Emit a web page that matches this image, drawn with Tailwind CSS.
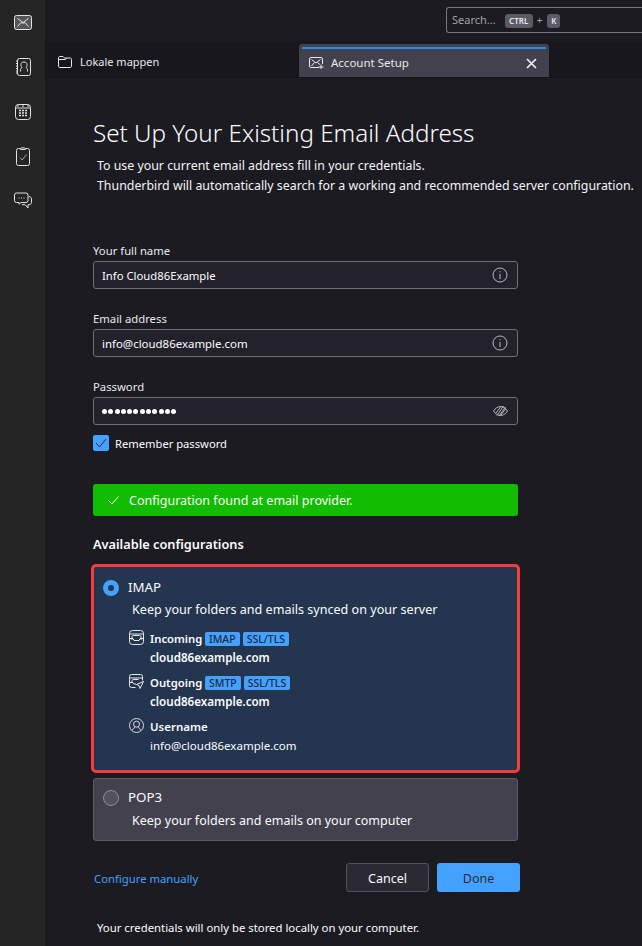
<!DOCTYPE html>
<html lang="en">

<head>
  <meta charset="UTF-8">
  <title>Account Setup</title>
  <script src="https://cdn.jsdelivr.net/npm/@tailwindcss/browser@4"></script>
</head>

<body class="bg-[#1c1b22] h-[946px] overflow-hidden font-['Noto_Sans',sans-serif] text-[#fbfbfe]">
  <div class="flex h-[946px]">
    <!-- spaces toolbar -->
    <nav class="w-[45px] shrink-0 bg-[#252525] flex flex-col items-center pt-[15px] text-[#e4e4e4]">
      <svg width="18" height="15" viewBox="0 0 18 15" fill="#55555a" stroke="currentColor" stroke-width="1"><rect x=".5" y=".5" width="17" height="14" rx="2" /><path d="M3.500 3.500 9 7.500l5.500-4M3.500 11.500 7 7.500M14.500 11.500 11 7.500M7 7.500c1.300.800 2.700.800 4 0" fill="none" /></svg>
      <svg class="mt-[28px]" width="16" height="18" viewBox="0 0 16 18" fill="none" stroke="currentColor" stroke-width="1"><rect x="2.500" y=".5" width="13" height="17" rx="2" /><path d="M1 3h2M1 5.500h2M1 8h2M1 10.500h2M1 13h2M1 15h2" /><path d="M5.500 13.500v-2c0-1 1-1.500 1.500-2-.7-.7-1-1.500-1-3 0-1.500 1-2.500 3-2.500s3 1 3 2.500c0 1.500-.3 2.300-1 3 .5.500 1.500 1 1.500 2v2" /></svg>
      <svg class="mt-[28px]" width="16" height="16" viewBox="0 0 16 16" fill="none" stroke="currentColor" stroke-width="1"><rect x=".5" y=".5" width="15" height="15" rx="3" /><path d="M.5 4h15M3 .5V3M8 .5V3M13 .5V3" /><path d="M4 6.500h2M7 6.500h2M10 6.500h2M4 9h2M7 9h2M10 9h2M4 11.500h2M7 11.500h2M10 11.500h2" stroke-width="1.300" /></svg>
      <svg class="mt-[27px]" width="14" height="19" viewBox="0 0 14 19" fill="none" stroke="currentColor" stroke-width="1"><rect x=".5" y="1.500" width="13" height="17" rx="2" /><path d="M4.500 1.500c0-1 5-1 5 0v1h-5z" fill="#252525" /><path d="M4 10.500 6.200 13 10.500 7.500" stroke="#a8a8a8" /></svg>
      <svg class="mt-[26px]" width="18" height="19" viewBox="0 0 18 18" fill="none" stroke="currentColor" stroke-width="1"><path d="M2.500.5h9.500a2 2 0 0 1 2 2v5.500a2 2 0 0 1-2 2H7l-2 1.800v-1.800H2.500a2 2 0 0 1-2-2V2.500a2 2 0 0 1 2-2z" /><path d="M15 4c1.500.300 2.500 1.200 2.500 2.500v3.500c0 1.200-.8 2-2 2.200h-1.500v3.300l-3-3.300H8" /><path d="M4.500 5.500h1M7 5.500h1M9.500 5.500h1" /></svg>
    </nav>

    <div class="flex-1 min-w-0 flex flex-col">
      <!-- title bar -->
      <header class="h-[41px] shrink-0 bg-[#1c1b22] pt-[7px] pl-[401px]">
        <div class="h-[26px] w-[220px] border border-[#77777f] rounded-l-[3px] border-r-0 flex items-center pl-[5px] pt-[1px] text-[11px] text-[#a2a2a8]">
          Search...
          <span class="ml-[9px] bg-[#5b5b66] text-[#e8e8ec] rounded-[3px] h-[14px] w-[28px] flex items-center justify-center text-[8px] font-semibold">CTRL</span>
          <span class="mx-[4px] text-[10px]">+</span>
          <span class="ml-[1px] bg-[#5b5b66] text-[#e8e8ec] rounded-[3px] h-[14px] w-[13px] flex items-center justify-center text-[8px] font-semibold">K</span>
        </div>
      </header>

      <!-- tabs -->
      <div class="h-[37px] shrink-0 bg-[#17171d] flex items-end border-b border-[#121217]">
        <div class="w-[254px] h-[37px] flex items-center pl-[13px] pt-[7px] gap-[8px] text-[11px] text-[#e8e8ec]">
          <svg width="14" height="12" viewBox="0 0 14 12" fill="none" stroke="currentColor" stroke-width="1"><path d="M.5 2c0-1 .5-1.500 1.500-1.500h3l1.500 1.500h5.500c1 0 1.500.5 1.500 1.500V10c0 1-.5 1.500-1.500 1.500H2c-1 0-1.500-.5-1.500-1.500zM.5 3.500h7l1-1.500" /></svg>
          Lokale mappen
        </div>
        <div class="w-[250px] h-[33px] bg-[#42414d] rounded-t-[3px] pt-[3px] px-[3px]">
          <div class="h-[2px] bg-[#2a8ae6]"></div>
          <div class="flex items-center h-[26px] pt-[2px] pl-[7px] pr-[9px] text-[11.500px] text-[#e8e8ec]">
            <svg width="15" height="12" viewBox="0 0 15 12" fill="none" stroke="currentColor" stroke-width="1"><path d="M10 10.500H2a1.500 1.500 0 0 1-1.500-1.500V2A1.500 1.500 0 0 1 2 .5h10A1.500 1.500 0 0 1 13.500 2v5" /><path d="M2.500 2.500 7 6l4.500-3.500M2.500 9 5.500 5.500M11 7.500 8.500 5.500M12 7.500v4.500M9.500 10h5" /></svg>
            <span class="ml-[7px] flex-1">Account Setup</span>
            <svg width="11" height="11" viewBox="0 0 11 11" stroke="#f4f4f6" stroke-width="1.600"><path d="M1 1l9 9M10 1l-9 9" /></svg>
          </div>
        </div>
      </div>

      <!-- account form -->
      <main class="flex-1 min-h-0 pl-[48px] w-[425px] box-content">
        <h1 class="mt-[36px] h-[38px] leading-[38px] text-[24.200px] font-light whitespace-nowrap">Set Up Your Existing Email Address</h1>
        <p class="mt-[4px] ml-[4px] text-[12.370px] leading-[20px] whitespace-nowrap text-[#f4f4f6]">To use your current email address fill in your credentials.<br>Thunderbird will automatically search for a working and recommended server configuration.</p>

        <label class="block mt-[46px] text-[11.300px] leading-[17px] text-[#e8e8ec]">Your full name</label>
        <div class="mt-[2px] h-[28px] bg-[#23222b] border border-[#6f6f78] rounded-[3px] flex items-center justify-between pl-[8px] pr-[9px] text-[11.300px]">
          <span class="pt-[2px]">Info Cloud86Example</span>
          <svg width="16" height="16" viewBox="0 0 16 16" fill="none" stroke="#b8b8bc" stroke-width="1"><circle cx="8" cy="8" r="7" /><path d="M8 7v5M8 4.200v1.200" /></svg>
        </div>

        <label class="block mt-[21px] text-[11.300px] leading-[17px] text-[#e8e8ec]">Email address</label>
        <div class="mt-[2px] h-[28px] bg-[#23222b] border border-[#6f6f78] rounded-[3px] flex items-center justify-between pl-[8px] pr-[9px] text-[11.450px]">
          <span class="pt-[2px]">info@cloud86example.com</span>
          <svg width="16" height="16" viewBox="0 0 16 16" fill="none" stroke="#b8b8bc" stroke-width="1"><circle cx="8" cy="8" r="7" /><path d="M8 7v5M8 4.200v1.200" /></svg>
        </div>

        <label class="block mt-[21px] text-[11.300px] leading-[17px] text-[#e8e8ec]">Password</label>
        <div class="mt-[2px] h-[28px] bg-[#23222b] border border-[#6f6f78] rounded-[3px] flex items-center justify-between pl-[8px] pr-[9px]">
          <span class="flex gap-[1.300px]">
            <i class="w-[5px] h-[5px] rounded-full bg-white"></i><i class="w-[5px] h-[5px] rounded-full bg-white"></i><i class="w-[5px] h-[5px] rounded-full bg-white"></i><i class="w-[5px] h-[5px] rounded-full bg-white"></i><i class="w-[5px] h-[5px] rounded-full bg-white"></i><i class="w-[5px] h-[5px] rounded-full bg-white"></i><i class="w-[5px] h-[5px] rounded-full bg-white"></i><i class="w-[5px] h-[5px] rounded-full bg-white"></i><i class="w-[5px] h-[5px] rounded-full bg-white"></i><i class="w-[5px] h-[5px] rounded-full bg-white"></i><i class="w-[5px] h-[5px] rounded-full bg-white"></i><i class="w-[5px] h-[5px] rounded-full bg-white"></i>
          </span>
          <svg width="15" height="12" viewBox="0 0 15 12" fill="none" stroke="#b8b8bc" stroke-width="1"><path d="M.5 6c2-3 4.300-4.500 7-4.500S12.500 3 14.500 6c-2 3-4.300 4.500-7 4.500S2.500 9 .5 6z" /><path d="M4 10.500 10.500 1M6 11 12.500 2M3 8l5-6.500M7.500 10.500l5-6.500" /></svg>
        </div>

        <div class="mt-[10px] flex items-center gap-[6px] text-[11.200px] h-[16px]">
          <span class="w-[16px] h-[16px] rounded-[2px] bg-[#45a1ff] flex items-center justify-center">
            <svg width="12" height="10" viewBox="0 0 12 10" fill="none" stroke="#2b2a33" stroke-width="1"><path d="M1 5l3.500 4L11 1" /></svg>
          </span>
          <span class="pt-[2px]">Remember password</span>
        </div>

        <div class="mt-[33px] h-[32px] bg-[#12bc00] rounded-[3px] flex items-center pl-[15px] gap-[10px] text-[12.500px]">
          <svg width="11" height="9" viewBox="0 0 11 9" fill="none" stroke="#fbfbfe" stroke-width="1"><path d="M.5 4.500 4 8l6.500-7.500" /></svg>
          <span class="pt-[2px]">Configuration found at email provider.</span>
        </div>

        <h2 class="mt-[20px] text-[12.750px] leading-[17px] font-semibold">Available configurations</h2>

        <!-- IMAP, outlined in red -->
        <div class="mt-[11px] -mx-[2px] w-[429px] h-[209px] bg-[#23354f] border-[3px] border-[#f63d3d] rounded-[5px] pl-[9px] pt-[12px]">
          <div class="flex items-center gap-[9px] h-[18px] text-[13.300px]">
            <span class="w-[16px] h-[16px] rounded-full border-[5px] border-[#45a1ff] bg-[#23354f]"></span>
            IMAP
          </div>
          <p class="mt-[4px] ml-[29px] text-[12.580px] leading-[18px]">Keep your folders and emails synced on your server</p>

          <div class="mt-[10px] flex gap-[6px] ml-[26px]">
            <svg class="mt-[1px] shrink-0" width="15" height="15" viewBox="0 0 15 15" fill="none" stroke="#e8e8ec" stroke-width="1"><rect x=".5" y=".5" width="14" height="14" rx="3" /><path d="M.5 4h14M3 10V7c0-1 .5-1.500 1.500-1.500h6c1 0 1.500.500 1.500 1.500v3M.5 8.500H4l1 2h5l1-2h3.500" /></svg>
            <div class="text-[11.600px] leading-[19px] font-semibold">
              <div class="flex items-center gap-[3px]"><span class="w-[52px] text-[11.300px]">Incoming</span>
                <span class="h-[14px] px-[4px] rounded-[2px] bg-[#45a1ff] text-[#1c2a40] text-[10.500px] leading-[14px] font-medium">IMAP</span>
                <span class="h-[14px] px-[4px] rounded-[2px] bg-[#45a1ff] text-[#1c2a40] text-[10.500px] leading-[14px] font-medium">SSL/TLS</span>
              </div>
              <div>cloud86example.com</div>
            </div>
          </div>

          <div class="mt-[6px] flex gap-[6px] ml-[26px]">
            <svg class="mt-[1px] shrink-0" width="15" height="15" viewBox="0 0 15 15" fill="none" stroke="#e8e8ec" stroke-width="1"><path d="M6.500 13.500H2.500a2 2 0 0 1-2-2v-9a2 2 0 0 1 2-2h9a2 2 0 0 1 2 2v4M.5 4h13M3 9V7c0-1 .5-1.500 1.500-1.500h5M.5 8.500H4l1 1.500h2" /><path d="M14.500 7.500 7.500 10.500l2.500 1 1 3z" /></svg>
            <div class="text-[11.600px] leading-[19px] font-semibold">
              <div class="flex items-center gap-[3px]"><span class="w-[52px] text-[11.300px]">Outgoing</span>
                <span class="h-[14px] px-[4px] rounded-[2px] bg-[#45a1ff] text-[#1c2a40] text-[10.500px] leading-[14px] font-medium">SMTP</span>
                <span class="h-[14px] px-[4px] rounded-[2px] bg-[#45a1ff] text-[#1c2a40] text-[10.500px] leading-[14px] font-medium">SSL/TLS</span>
              </div>
              <div>cloud86example.com</div>
            </div>
          </div>

          <div class="mt-[6px] flex gap-[6px] ml-[26px]">
            <svg class="mt-[1px] shrink-0" width="15" height="15" viewBox="0 0 15 15" fill="none" stroke="#d8d8dc" stroke-width="1"><circle cx="7.500" cy="7.500" r="7" /><circle cx="7.500" cy="6.200" r="3" /><path d="M3.500 12.500c0-1.500 1-2.500 2.500-3M11.500 12.500c0-1.500-1-2.500-2.500-3" /></svg>
            <div class="text-[11.500px] leading-[19px]">
              <div class="font-semibold">Username</div>
              <div>info@cloud86example.com</div>
            </div>
          </div>
        </div>

        <!-- POP3 -->
        <div class="mt-[5px] h-[63px] bg-[#42414d] border border-[#5b5b66] rounded-[3px] pl-[9px] pt-[10px]">
          <div class="flex items-center gap-[9px] h-[18px] text-[13.300px]">
            <span class="w-[16px] h-[16px] rounded-full border border-[#8f8f9d] bg-[#52525e]"></span>
            POP3
          </div>
          <p class="mt-[5px] ml-[29px] text-[12.500px] leading-[18px]">Keep your folders and emails on your computer</p>
        </div>

        <div class="mt-[22px] flex items-center w-[427px]">
          <a class="ml-[1px] text-[11.300px] text-[#45a1ff] pt-[3px]">Configure manually</a>
          <button class="ml-auto w-[83px] h-[29px] pt-[3px] bg-[#2b2a33] border border-[#52525e] rounded-[3px] text-[12.500px]">Cancel</button>
          <button class="ml-[8px] w-[83px] h-[29px] pt-[3px] bg-[#45a1ff] rounded-[3px] text-[12.500px] text-[#2b2a33]">Done</button>
        </div>

        <p class="mt-[27px] ml-[4px] text-[11.350px] leading-[18px] whitespace-nowrap">Your credentials will only be stored locally on your computer.</p>
      </main>
    </div>
  </div>
</body>

</html>
